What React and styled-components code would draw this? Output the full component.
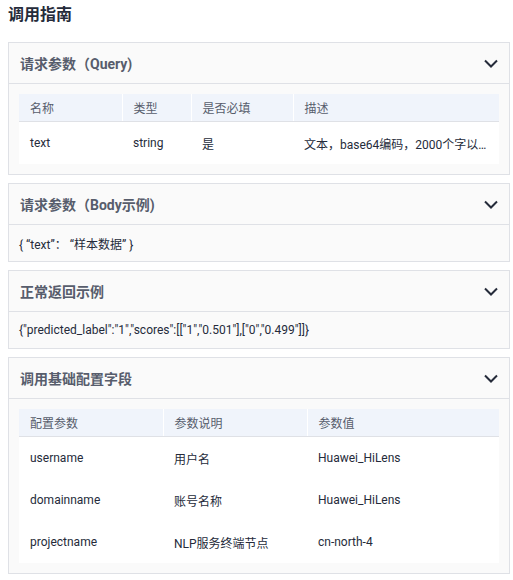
import React from 'react';
import styled, { createGlobalStyle } from 'styled-components';

const GlobalStyle = createGlobalStyle`
  body {
    margin: 0;
    background: #fff;
    font-family: Roboto, "Noto Sans CJK SC", sans-serif;
    color: #252b3a;
  }
`;

const Page = styled.div`
  width: 502px;
  padding: 0 0 0 8px;
`;

const Title = styled.h2`
  margin: 0;
  height: 42px;
  line-height: 30px;
  font-size: 16px;
  font-weight: 700;
  color: #252b3a;
`;

const Panel = styled.section`
  border: 1px solid #dfe1e6;
  background: #fafafa;
  margin-bottom: 8px;
`;

const PanelHead = styled.div`
  height: 40px;
  display: flex;
  align-items: center;
  justify-content: space-between;
  padding: 0 11px 0 11px;
  border-bottom: 1px solid #dfe1e6;
  font-size: 14px;
  font-weight: 700;
  color: #575d6c;
`;

const PanelBody = styled.div`
  padding: ${(p) => (p.$table ? '10px' : '0 10px')};
  height: ${(p) => (p.$table ? 'auto' : '36px')};
  display: ${(p) => (p.$table ? 'block' : 'flex')};
  align-items: center;
  font-size: 12px;
  color: #252b3a;
`;

const Code = styled.span`
  white-space: nowrap;
`;

const Table = styled.table`
  width: 100%;
  table-layout: fixed;
  border-collapse: collapse;
  background: #fff;
  font-size: 12px;

  th {
    height: 27px;
    padding: 0 11px;
    text-align: left;
    font-weight: 400;
    color: #575d6c;
    background: #f0f4fb;
    border-bottom: 1px solid #dfe1e6;
    border-left: 1px solid #fff;
  }
  th:first-child {
    border-left: none;
  }
  td {
    height: 42px;
    padding: 0 11px;
    color: #252b3a;
    white-space: nowrap;
    overflow: hidden;
    text-overflow: ellipsis;
  }
`;

const Col = styled.col`
  width: ${(p) => p.$w || 'auto'};
`;

const Chevron = () => (
  <svg width="14" height="9" viewBox="0 0 14 9">
    <polyline
      points="1,1.5 7,7.5 13,1.5"
      fill="none"
      stroke="#252b3a"
      strokeWidth="2"
    />
  </svg>
);

const Section = ({ title, children, table }) => (
  <Panel>
    <PanelHead>
      <span>{title}</span>
      <Chevron />
    </PanelHead>
    <PanelBody $table={table}>{children}</PanelBody>
  </Panel>
);

const configRows = [
  ['username', '用户名', 'Huawei_HiLens'],
  ['domainname', '账号名称', 'Huawei_HiLens'],
  ['projectname', 'NLP服务终端节点', 'cn-north-4'],
];

export default function App() {
  return (
    <Page>
      <GlobalStyle />
      <Title>调用指南</Title>

      <Section title="请求参数（Query)" table>
        <Table>
          <colgroup>
            <Col $w="103px" />
            <Col $w="69px" />
            <Col $w="102px" />
            <Col />
          </colgroup>
          <thead>
            <tr>
              <th>名称</th>
              <th>类型</th>
              <th>是否必填</th>
              <th>描述</th>
            </tr>
          </thead>
          <tbody>
            <tr>
              <td>text</td>
              <td>string</td>
              <td>是</td>
              <td>文本，base64编码，2000个字以内的文本内容</td>
            </tr>
          </tbody>
        </Table>
      </Section>

      <Section title="请求参数（Body示例)">
        <Code>{'{ “text”： “样本数据” }'}</Code>
      </Section>

      <Section title="正常返回示例">
        <Code>
          {'{"predicted_label":"1","scores":[["1","0.501"],["0","0.499"]]}'}
        </Code>
      </Section>

      <Section title="调用基础配置字段" table>
        <Table>
          <colgroup>
            <Col $w="144px" />
            <Col $w="144px" />
            <Col />
          </colgroup>
          <thead>
            <tr>
              <th>配置参数</th>
              <th>参数说明</th>
              <th>参数值</th>
            </tr>
          </thead>
          <tbody>
            {configRows.map((r) => (
              <tr key={r[0]}>
                <td>{r[0]}</td>
                <td>{r[1]}</td>
                <td>{r[2]}</td>
              </tr>
            ))}
          </tbody>
        </Table>
      </Section>
    </Page>
  );
}
